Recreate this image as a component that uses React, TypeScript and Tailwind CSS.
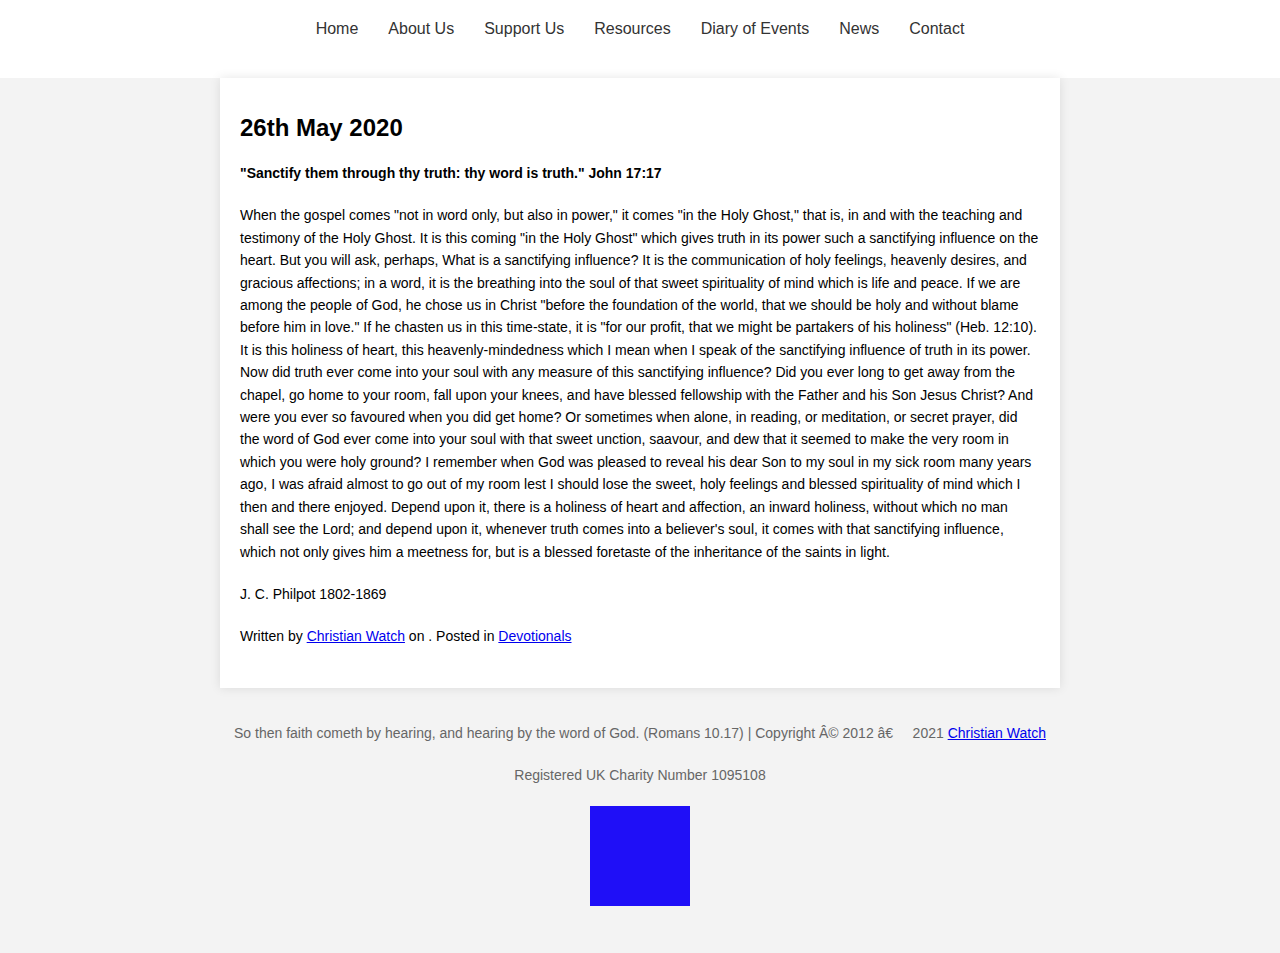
const navItems = ['Home', 'About Us', 'Support Us', 'Resources', 'Diary of Events', 'News', 'Contact'];

const body =
  'When the gospel comes "not in word only, but also in power," it comes "in the Holy Ghost," that is, in and with the teaching and testimony of the Holy Ghost. It is this coming "in the Holy Ghost" which gives truth in its power such a sanctifying influence on the heart. But you will ask, perhaps, What is a sanctifying influence? It is the communication of holy feelings, heavenly desires, and gracious affections; in a word, it is the breathing into the soul of that sweet spirituality of mind which is life and peace. If we are among the people of God, he chose us in Christ "before the foundation of the world, that we should be holy and without blame before him in love." If he chasten us in this time-state, it is "for our profit, that we might be partakers of his holiness" (Heb. 12:10). It is this holiness of heart, this heavenly-mindedness which I mean when I speak of the sanctifying influence of truth in its power. Now did truth ever come into your soul with any measure of this sanctifying influence? Did you ever long to get away from the chapel, go home to your room, fall upon your knees, and have blessed fellowship with the Father and his Son Jesus Christ? And were you ever so favoured when you did get home? Or sometimes when alone, in reading, or meditation, or secret prayer, did the word of God ever come into your soul with that sweet unction, saavour, and dew that it seemed to make the very room in which you were holy ground? I remember when God was pleased to reveal his dear Son to my soul in my sick room many years ago, I was afraid almost to go out of my room lest I should lose the sweet, holy feelings and blessed spirituality of mind which I then and there enjoyed. Depend upon it, there is a holiness of heart and affection, an inward holiness, without which no man shall see the Lord; and depend upon it, whenever truth comes into a believer\'s soul, it comes with that sanctifying influence, which not only gives him a meetness for, but is a blessed foretaste of the inheritance of the saints in light.';

export default function App() {
  return (
    <div className="min-h-[953px] bg-[#f3f3f3] font-['Liberation_Sans',Arial,sans-serif]">
      <header className="h-[78px] bg-white pt-[17px]">
        <nav className="flex justify-center gap-[30px] text-[16px] leading-6 text-[#333]">
          {navItems.map((item) => (
            <a key={item} href="#">{item}</a>
          ))}
        </nav>
      </header>

      <main className="mx-auto w-[840px] bg-white px-5 pt-5 pb-5 text-black shadow-[0_0_10px_rgba(0,0,0,0.1)]">
        <h2 className="mt-[15px] text-[24px] font-bold leading-[30px]">26th May 2020</h2>
        <p className="mt-[19px] text-[14px] font-bold leading-[22.4px]">
          "Sanctify them through thy truth: thy word is truth." John 17:17
        </p>
        <p className="mt-5 text-[14px] leading-[22.4px]">{body}</p>
        <p className="mt-5 text-[14px] leading-[22.4px]">J. C. Philpot 1802-1869</p>
        <p className="mt-5 mb-5 text-[14px] leading-[22.4px]">
          Written by <a href="#" className="text-[#0000ee] underline">Christian Watch</a> on . Posted in{' '}
          <a href="#" className="text-[#0000ee] underline">Devotionals</a>
        </p>
      </main>

      <footer className="flex flex-col items-center pb-[47px] text-[14px] leading-[22.4px] text-[#666]">
        <p className="mt-[34px]">
          So then faith cometh by hearing, and hearing by the word of God. (Romans 10.17) | Copyright Â© 2012 â€{'\u00a0\u00a0\u00a0\u00a0'} 2021{' '}
          <a href="#" className="text-[#0000ee] underline">Christian Watch</a>
        </p>
        <p className="mt-5">Registered UK Charity Number 1095108</p>
        <div className="mt-[19px] h-[100px] w-[100px] bg-[#1f0ff7]" />
      </footer>
    </div>
  );
}
